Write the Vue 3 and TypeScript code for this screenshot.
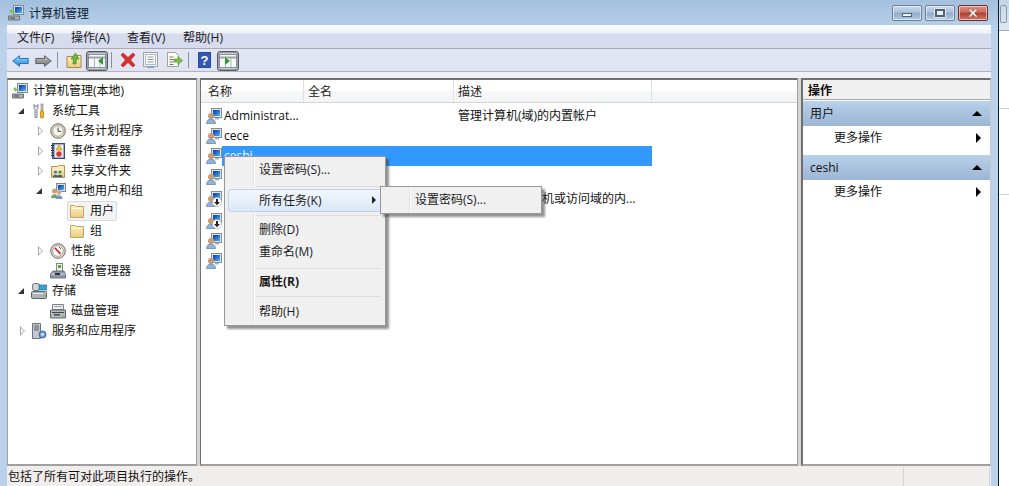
<script setup lang="ts">
interface TreeRow { label: string; depth: number; arrow: '' | 'open' | 'closed'; icon: string; selected?: boolean }
const tree: TreeRow[] = [
  { label: '计算机管理(本地)', depth: 0, arrow: '', icon: 'computer' },
  { label: '系统工具', depth: 1, arrow: 'open', icon: 'tools' },
  { label: '任务计划程序', depth: 2, arrow: 'closed', icon: 'clock' },
  { label: '事件查看器', depth: 2, arrow: 'closed', icon: 'log' },
  { label: '共享文件夹', depth: 2, arrow: 'closed', icon: 'share' },
  { label: '本地用户和组', depth: 2, arrow: 'open', icon: 'group' },
  { label: '用户', depth: 3, arrow: '', icon: 'folder', selected: true },
  { label: '组', depth: 3, arrow: '', icon: 'folder' },
  { label: '性能', depth: 2, arrow: 'closed', icon: 'gauge' },
  { label: '设备管理器', depth: 2, arrow: '', icon: 'device' },
  { label: '存储', depth: 1, arrow: 'open', icon: 'storage' },
  { label: '磁盘管理', depth: 2, arrow: '', icon: 'disk' },
  { label: '服务和应用程序', depth: 1, arrow: 'closed', icon: 'server' },
]
interface UserRow { name: string; desc: string; down?: boolean; gap: number; selected?: boolean }
const users: UserRow[] = [
  { name: 'Administrat...', desc: '管理计算机(域)的内置帐户', gap: 0 },
  { name: 'cece', desc: '', gap: 0 },
  { name: 'ceshi', desc: '', gap: 0, selected: true },
  { name: '', desc: '', gap: 1 },
  { name: '', desc: '供来宾访问计算机或访问域的内...', down: true, gap: 2 },
  { name: '', desc: '', down: true, gap: 2 },
  { name: '', desc: '', gap: 0 },
  { name: '', desc: '', gap: 0 },
]
const menus = ['文件(F)', '操作(A)', '查看(V)', '帮助(H)']
</script>

<template>
  <div class="screen">
    <svg class="defs" width="0" height="0" aria-hidden="true">
      <defs>
        <linearGradient id="g-blue" x1="0" y1="0" x2="0" y2="1"><stop offset="0" stop-color="#9fe0ff"/><stop offset="1" stop-color="#1f83d8"/></linearGradient>
        <linearGradient id="g-gray" x1="0" y1="0" x2="0" y2="1"><stop offset="0" stop-color="#c8c8c8"/><stop offset="1" stop-color="#6f6f6f"/></linearGradient>
        <linearGradient id="g-folder" x1="0" y1="0" x2="0" y2="1"><stop offset="0" stop-color="#fdf0c0"/><stop offset="1" stop-color="#eccb7c"/></linearGradient>
        <linearGradient id="g-screen" x1="0" y1="0" x2="1" y2="1"><stop offset="0" stop-color="#0b2fb0"/><stop offset="1" stop-color="#49b6ee"/></linearGradient>
      </defs>
      <symbol id="i-computer" viewBox="0 0 16 16">
        <rect x="5.500" y="0.500" width="10" height="9" fill="#dfe3e8" stroke="#7f8790"/>
        <rect x="7" y="2" width="7" height="6" fill="url(#g-screen)"/>
        <path d="M0.500 11h11v4h-11z" fill="#a9afb5" stroke="#6a7076"/>
        <path d="M2 13h5" stroke="#3d4247"/>
        <path d="M1 6l3-2v1.500h2.500v2H4V9z" fill="#7cc452"/>
      </symbol>
      <symbol id="i-tools" viewBox="0 0 16 16">
        <path d="M3 1.500v4l1 1v8h2v-8l1-1v-4L6 3H4z" fill="#dfe3e6" stroke="#6b6f73" stroke-width=".8"/>
        <rect x="10" y="1" width="2" height="7" fill="#c9ccd0" stroke="#70757a" stroke-width=".6"/>
        <rect x="9.500" y="8" width="3" height="7" rx="1" fill="#f2b51c" stroke="#a87808" stroke-width=".7"/>
      </symbol>
      <symbol id="i-clock" viewBox="0 0 16 16">
        <circle cx="8" cy="8" r="7.300" fill="#d8d2bd" stroke="#74756f"/>
        <circle cx="8" cy="8" r="5.200" fill="#f7f6ee" stroke="#9a9a90" stroke-width=".7"/>
        <path d="M8 4.500V8.300h3" fill="none" stroke="#444" stroke-width="1"/>
      </symbol>
      <symbol id="i-log" viewBox="0 0 16 16">
        <rect x="2.500" y="0.500" width="12" height="15" fill="#5d78a3" stroke="#3b4c6b"/>
        <rect x="4.500" y="1.500" width="9" height="13" fill="#e8ecf2"/>
        <path d="M1 2.500h3M1 5h3M1 7.500h3M1 10h3M1 12.500h3" stroke="#30394a"/>
        <path d="M9 2l3 5H6z" fill="#f6c729" stroke="#a57d0c" stroke-width=".5"/>
        <circle cx="9" cy="11" r="2.700" fill="#d8383c"/>
      </symbol>
      <symbol id="i-share" viewBox="0 0 16 16">
        <path d="M1.500 3.500v11h13v-12h-6l-1 1z" fill="url(#g-folder)" stroke="#b4934d"/>
        <path d="M2 6.500h12" stroke="#fff8d8"/>
        <circle cx="5.500" cy="9" r="1.600" fill="#3a7fc7"/><circle cx="10" cy="9" r="1.600" fill="#3f9a42"/>
        <path d="M3 14c0-3 5-3 5 0zM7.500 14c0-3 5-3 5 0z" fill="#2d5d9a"/>
      </symbol>
      <symbol id="i-group" viewBox="0 0 16 16">
        <rect x="6.500" y="0.500" width="9" height="8" fill="#dfe3e8" stroke="#7f8790"/>
        <rect x="8" y="2" width="6" height="5" fill="url(#g-screen)"/>
        <circle cx="4.500" cy="8" r="2.500" fill="#c9a078"/>
        <path d="M1 15c0-5 7-5 7 0z" fill="#7aa35a"/>
        <circle cx="9" cy="9.500" r="2.400" fill="#d3ab84"/>
        <path d="M5.500 16c0-5 7-5 7 0z" fill="#6d9bd0"/>
      </symbol>
      <symbol id="i-folder" viewBox="0 0 16 16">
        <path d="M1.500 2.500v12h13v-11H7l-1-1z" fill="url(#g-folder)" stroke="#c2a768"/>
        <path d="M2.500 5.500h11" stroke="#fff9e2"/>
      </symbol>
      <symbol id="i-gauge" viewBox="0 0 16 16">
        <circle cx="8" cy="8" r="7.300" fill="#dcdcd6" stroke="#6d6f6c"/>
        <circle cx="8" cy="8" r="5.300" fill="#fbfbf8" stroke="#8d8d88" stroke-width=".7"/>
        <path d="M5 5l5.500 6" stroke="#d11f1f" stroke-width="1.800"/>
        <path d="M9 4l2 2" stroke="#d11f1f"/>
      </symbol>
      <symbol id="i-device" viewBox="0 0 16 16">
        <rect x="6.500" y="0.500" width="6" height="8" fill="#eef0e8" stroke="#83877f"/>
        <rect x="8" y="2" width="3" height="3" fill="#54a54a"/>
        <path d="M3 8h11l1.500 3v4H.5v-4z" fill="#8f9aa6" stroke="#555e68" stroke-width=".8"/>
        <path d="M1 11h14" stroke="#d7dde3"/>
        <rect x="5" y="10" width="5" height="2" fill="#2e3338"/>
      </symbol>
      <symbol id="i-storage" viewBox="0 0 16 16">
        <rect x="1.500" y="0.500" width="7" height="7" rx="2" fill="#cfd4d8" stroke="#6d7378"/>
        <rect x="8" y="2" width="7.500" height="5" fill="#3aa0d8" stroke="#266a94" stroke-width=".7"/>
        <rect x="0.500" y="8.500" width="15" height="7" rx="1" fill="#aeb4b8" stroke="#5e6468"/>
        <path d="M2 10.500h10" stroke="#e3e7ea"/>
        <rect x="12.500" y="12" width="1.800" height="1.800" fill="#58c04a"/>
      </symbol>
      <symbol id="i-disk" viewBox="0 0 16 16">
        <path d="M2.500 1.500h11v5h-11z" fill="#eef0f1" stroke="#7b8186"/>
        <path d="M4 3.500h8" stroke="#9ba1a6"/>
        <path d="M.5 7h15v8H.5z" fill="#b4babd" stroke="#62686c"/>
        <path d="M2 9.500h12" stroke="#3f4549"/>
        <rect x="4" y="11" width="6" height="1.600" fill="#4a5054"/>
        <rect x="12" y="12" width="1.800" height="1.800" fill="#6ec654"/>
      </symbol>
      <symbol id="i-server" viewBox="0 0 16 16">
        <path d="M1.500 .5h8v15h-8z" fill="#c3c9cf" stroke="#6c7278"/>
        <path d="M3 3h5M3 5h5M3 7h5" stroke="#55606a"/>
        <circle cx="11.500" cy="11.500" r="3.500" fill="#6f9bd0" stroke="#3d6596"/>
        <circle cx="11.500" cy="11.500" r="1.300" fill="#eef4fb"/>
      </symbol>
      <symbol id="i-user" viewBox="0 0 16 16">
        <rect x="5.500" y="0.500" width="10" height="9" fill="#e1e5e9" stroke="#848b92"/>
        <rect x="7" y="2" width="7" height="6" fill="url(#g-screen)"/>
        <path d="M9 10h4v1.500H9z" fill="#aab0b6"/>
        <circle cx="5" cy="8" r="3" fill="#c79c74"/>
        <path d="M.5 15.500c0-6 9-6 9 0z" fill="#8fb4de" stroke="#5c7da6" stroke-width=".7"/>
      </symbol>
      <symbol id="i-user-down" viewBox="0 0 16 16">
        <rect x="5.500" y="0.500" width="10" height="9" fill="#e1e5e9" stroke="#848b92"/>
        <rect x="7" y="2" width="7" height="6" fill="url(#g-screen)"/>
        <circle cx="5" cy="8" r="3" fill="#c79c74"/>
        <path d="M.5 15.500c0-6 9-6 9 0z" fill="#8fb4de" stroke="#5c7da6" stroke-width=".7"/>
        <circle cx="11" cy="11" r="4.600" fill="#fff" stroke="#9a9a9a" stroke-width=".6"/>
        <path d="M10 8h2v3h2l-3 3.200L8 11h2z" fill="#222"/>
      </symbol>
      <symbol id="i-split" viewBox="0 0 18 14">
        <rect x=".5" y=".5" width="17" height="13" fill="#f5f7f9" stroke="#8a929a"/>
        <path d="M1 3.500h16" stroke="#9ca4ab" stroke-width="2"/>
        <path d="M6.500 4v9M12 4v9" stroke="#aeb5bb"/>
      </symbol>
    </svg>

    <div class="win">
      <header class="title">
        <svg class="title-icon"><use href="#i-computer"/></svg>
        <span class="title-text">计算机管理</span>
        <div class="caps">
          <div class="cap"><i class="min"></i></div>
          <div class="cap"><i class="max"></i></div>
          <div class="cap close">
            <svg width="14" height="10" viewBox="0 0 14 10"><path d="M2 1h2.500L7 3.500 9.500 1H12L8.500 5 12 9H9.500L7 6.500 4.500 9H2l3.500-4z" fill="#fff" stroke="#7c3b33" stroke-width=".5"/></svg>
          </div>
        </div>
      </header>

      <div class="client">
        <nav class="menubar">
          <span v-for="m in menus" :key="m" class="menu-item">{{ m }}</span>
        </nav>

        <div class="toolbar">
          <svg class="tb back" width="17" height="12" viewBox="0 0 17 14" preserveAspectRatio="none"><path d="M.8 7L7.500 .8V4h8.700v6H7.500v3.200z" fill="url(#g-blue)" stroke="#1a6cb4"/></svg>
          <svg class="tb fwd" width="17" height="12" viewBox="0 0 17 14" preserveAspectRatio="none"><path d="M16.200 7L9.500 .8V4H.8v6h8.700v3.200z" fill="url(#g-gray)" stroke="#5a5a5a"/></svg>
          <i class="tsep s1"></i>
          <svg class="tb up" width="16" height="16" viewBox="0 0 16 16"><path d="M1 4.500v11h14v-12H8L7 4.500z" fill="url(#g-folder)" stroke="#a58a4a"/><path d="M7 12l.5-5L5 7l4.500-6L13 7h-2.500L10 12z" fill="#6fb83a" stroke="#3e7f1c" stroke-width=".6"/></svg>
          <div class="toggle t1">
            <svg width="18" height="14"><use href="#i-split"/></svg>
            <svg class="toggle-mark" width="5" height="8" viewBox="0 0 5 8"><path d="M5 0L0 4l5 4z" fill="#2f9a3a"/></svg>
          </div>
          <i class="tsep s2"></i>
          <svg class="tb del" width="16" height="16" viewBox="0 0 16 16"><path d="M1 3l2-2 5 4.500L13 1l2 2-4.500 5L15 13l-2 2-5-4.500L3 15l-2-2 4.500-5z" fill="#dd2b25" stroke="#a3211b" stroke-width=".6"/></svg>
          <svg class="tb prop" width="15" height="16" viewBox="0 0 15 16"><rect x=".5" y=".5" width="14" height="14" fill="#f4f5f6" stroke="#9ea3a8"/><rect x="2.500" y="2.500" width="10" height="10" fill="#fff" stroke="#b3b7bb"/><path d="M4.500 5h6M4.500 7.500h6M4.500 10h6" stroke="#8b9095"/><path d="M4 15.500h7" stroke="#5db3e4"/></svg>
          <svg class="tb exp" width="17" height="16" viewBox="0 0 17 16"><path d="M1.500.5h8l3 3v11h-11z" fill="#fbfaf0" stroke="#a4a294"/><path d="M3.500 5h4M3.500 7.500h4M3.500 10h4M3.500 12.500h4" stroke="#77766d"/><path d="M8 7h4V4.500L16.500 8.500 12 12.500V10H8z" fill="#7cc24c" stroke="#3f8222" stroke-width=".6"/></svg>
          <i class="tsep s3"></i>
          <svg class="tb help" width="13" height="16" viewBox="0 0 13 16"><rect width="13" height="16" fill="#2a4aa4"/><rect x="1" y="1" width="11" height="14" fill="#3a60c0" opacity=".6"/><text x="6.500" y="13" text-anchor="middle" fill="#fff" font-size="13" font-weight="700" font-family="Liberation Sans, sans-serif">?</text></svg>
          <div class="toggle t2">
            <svg width="18" height="14"><use href="#i-split"/></svg>
            <svg class="toggle-mark m2" width="5" height="8" viewBox="0 0 5 8"><path d="M0 0l5 4-5 4z" fill="#2f9a3a"/></svg>
          </div>
        </div>

        <div class="panes">
          <aside class="pane left">
            <div v-for="r in tree" :key="r.label" class="tree-row" :class="`d${r.depth}`">
              <span class="arrow" :class="r.arrow"></span>
              <svg class="tree-icon"><use :href="`#i-${r.icon}`"/></svg>
              <span class="tree-label" :class="{ sel: r.selected }">{{ r.label }}</span>
            </div>
          </aside>

          <main class="pane middle">
            <div class="thead">
              <span class="th c1">名称</span>
              <span class="th c2">全名</span>
              <span class="th c3">描述</span>
            </div>
            <div v-for="(u, i) in users" :key="i" class="urow" :class="`gap${u.gap}`">
              <svg class="uicon"><use :href="u.down ? '#i-user-down' : '#i-user'"/></svg>
              <div class="ucells" :class="{ selected: u.selected }">
                <span class="uname">{{ u.name }}</span>
                <span class="udesc">{{ u.desc }}</span>
              </div>
            </div>
          </main>

          <aside class="pane right">
            <div class="ahead">操作</div>
            <div class="aband">用户<i class="up-tri"></i></div>
            <div class="aitem">更多操作<i class="right-tri"></i></div>
            <div class="aband second">ceshi<i class="up-tri"></i></div>
            <div class="aitem">更多操作<i class="right-tri"></i></div>
          </aside>
        </div>

        <footer class="status">
          <span class="status-text">包括了所有可对此项目执行的操作。</span>
          <i class="st1"></i>
          <i class="st2"></i>
        </footer>
      </div>

      <div class="ctx">
        <div class="mi first">设置密码(S)...</div>
        <hr class="msep s-a" />
        <div class="mi hot">所有任务(K)<i class="m-tri"></i></div>
        <hr class="msep s-b" />
        <div class="mi">删除(D)</div>
        <div class="mi">重命名(M)</div>
        <hr class="msep s-c" />
        <div class="mi bold">属性(R)</div>
        <hr class="msep s-d" />
        <div class="mi">帮助(H)</div>
      </div>
      <div class="ctx sub">
        <div class="mi">设置密码(S)...</div>
      </div>
    </div>

    <div class="edge"></div>
    <div class="behind">
      <div class="behind-top"><i class="behind-btn"></i></div>
      <div class="behind-line l1"></div>
      <div class="behind-line l2"></div>
    </div>
  </div>
</template>

<style>
html, body { margin: 0; padding: 0; overflow: hidden; background: #fff; }
</style>

<style scoped>
.screen { width: 1009px; height: 486px; display: flex; overflow: hidden; position: relative; font: 12px/16px "Open Sans", "Noto Sans CJK SC", sans-serif; color: #111; }
.defs { position: absolute; }
.win { width: 998px; height: 486px; flex: none; display: flex; flex-direction: column; position: relative; background: linear-gradient(#a3c0de 0, #b9d1ea 30px, #b9d1ea 100%); }
.edge { width: 1px; background: #0b1a26; flex: none; }
.behind { flex: 1; background: #fff; position: relative; }
.behind-top { height: 30px; background: linear-gradient(#c2d6e8, #dfe9f2); border-bottom: 1px solid #a9a9a9; position: relative; }
.behind-btn { position: absolute; left: 1px; top: 5px; width: 5px; height: 16px; border: 1px solid #8d98a6; border-radius: 2px; }
.behind-line { position: absolute; left: 0; right: 0; height: 1px; background: #b8d5f5; }
.l1 { top: 108px; } .l2 { top: 194px; }

.title { height: 25px; flex: none; display: flex; align-items: center; padding-left: 8px; position: relative; }
.title-icon { width: 16px; height: 16px; }
.title-text { margin-left: 5px; margin-top: 2px; color: #10202e; }
.caps { position: absolute; right: 10px; top: 5px; display: flex; gap: 3px; }
.cap { width: 30px; height: 16px; box-sizing: border-box; border: 1px solid #6d7e94; border-radius: 2px; background: linear-gradient(#c7d8ea 0, #a9c2dc 45%, #8eabc9 50%, #b3cbe2 100%); display: flex; align-items: center; justify-content: center; box-shadow: inset 0 0 0 1px rgba(255,255,255,.55); }
.cap.close { border-color: #6b2b2a; background: linear-gradient(#dc9186 0, #c8695a 45%, #ad3f2f 50%, #cf7a66 100%); }
.min { display: block; width: 10px; height: 4px; margin-top: 4px; background: #f2f5f8; border: 1px solid #4f6178; box-sizing: border-box; }
.max { display: block; width: 10px; height: 8px; border: 2px solid #4f6178; background: #e9eef4; box-sizing: border-box; outline: 1px solid #dfe7ef; }

.client { flex: 1; margin-left: 7px; margin-right: 7px; display: flex; flex-direction: column; min-height: 0; background: #f0f0f5; }
.menubar { height: 23px; flex: none; display: flex; align-items: center; padding: 2px 0 0 10px; box-sizing: content-box; height: 21px; background: linear-gradient(#fbfcfe 0, #eef1f9 8px, #d6dbee 9px, #d6dbee 100%); border-bottom: 1px solid #a9a9ae; }
.menu-item { width: 56px; flex: none; color: #1a1a1a; }
.menu-item:first-child { width: 54px; }
.toolbar { height: 22px; flex: none; position: relative; background: linear-gradient(#e3e6f4, #dee2f1); border-bottom: 1px solid #b3b4ba; box-sizing: content-box; }
.tb { position: absolute; top: 4px; }
.back { left: 5px; top: 6px; } .fwd { left: 28px; top: 6px; } .up { left: 59px; top: 3px; }
.del { left: 113px; top: 3px; } .prop { left: 136px; top: 3px; } .exp { left: 159px; top: 3px; } .help { left: 191px; top: 3px; }
.tsep { position: absolute; top: 3px; width: 1px; height: 16px; background: #8d8f99; }
.s1 { left: 50px; } .s2 { left: 104px; } .s3 { left: 181px; }
.toggle { position: absolute; top: 2px; width: 22px; height: 20px; box-sizing: border-box; border: 1px solid #55585e; border-radius: 3px; background: #c5c8d2; box-shadow: inset 0 0 0 1px #9da0aa; display: flex; align-items: center; justify-content: center; }
.t1 { left: 79px; } .t2 { left: 210px; }
.toggle-mark { position: absolute; left: 11px; top: 5px; }
.m2 { left: 7px; }

.panes { flex: 1; min-height: 0; margin-top: 6px; display: flex; gap: 3px; background: #d4d4d4; }
.pane { background: #fff; box-sizing: border-box; min-height: 0; border-top: 2px solid #6f6f6f; border-bottom: 2px solid #a0a0a0; position: relative; overflow: hidden; }
.left { width: 190px; border-left: 1px solid #a0a0a0; border-right: 1px solid #a0a0a0; padding-top: 1px; z-index: 0; }
.middle { width: 598px; border-left: 1px solid #6f6f6f; border-right: 1px solid #a0a0a0; }
.right { flex: 1; border-left: 2px solid #6f6f6f; border-right: 1px solid #c8c8c8; }

.tree-row { height: 20px; display: flex; align-items: center; }
.d0 { padding-left: 4px; } .d1 { padding-left: 4px; } .d2 { padding-left: 22px; } .d3 { padding-left: 42px; }
.arrow { width: 16px; height: 10px; flex: none; position: relative; }
.d0 .arrow { width: 0; }
.d3 .arrow { width: 18px; }
.arrow.open::before { content: ""; position: absolute; left: 6px; top: 2px; border-style: solid; border-width: 0 0 6px 6px; border-color: transparent transparent #333 transparent; }
.arrow.closed::before { content: ""; position: absolute; left: 8px; top: 0; border-style: solid; border-width: 5px 0 5px 5px; border-color: transparent transparent transparent #a6a6a6; }
.arrow.closed::after { content: ""; position: absolute; left: 8.500px; top: 1.500px; border-style: solid; border-width: 3.500px 0 3.500px 3.500px; border-color: transparent transparent transparent #fff; }
.tree-icon { width: 16px; height: 16px; flex: none; }
.d0 .tree-icon { margin-left: 0; }
.d1 .tree-icon { margin-left: 3px; }
.d2 .tree-icon { margin-left: 4px; }
.d3 .tree-icon { margin-left: 1px; }
.tree-label { margin-left: 5px; white-space: nowrap; }
.sel { position: relative; }
.sel::before { content: ""; position: absolute; left: -23px; right: -3px; top: -2px; bottom: -2px; border: 1px solid #dadada; border-radius: 2px; background: #f3f3f3; z-index: -1; }

.thead { height: 22px; display: flex; background: linear-gradient(#fff 0, #fff 50%, #f6f7f8 50%, #f3f4f6 100%); border-bottom: 1px solid #d5d5d5; }
.th { box-sizing: border-box; padding-left: 7px; line-height: 23px; border-right: 1px solid #dde0e3; color: #222; }
.c1 { width: 103px; } .c2 { width: 150px; padding-left: 4px; } .c3 { width: 198px; padding-left: 4px; }
.urow { height: 20px; display: flex; align-items: center; padding-left: 5px; }
.thead + .urow { margin-top: 3px; }
.gap1 { margin-top: 1px; } .gap2 { margin-top: 2px; }
.uicon { width: 16px; height: 16px; flex: none; }
.ucells { display: flex; width: 430px; height: 20px; line-height: 20px; padding-left: 2px; box-sizing: border-box; }
.ucells.selected { background: #3399ff; color: #fff; }
.uname { width: 234px; flex: none; white-space: nowrap; }
.udesc { white-space: nowrap; }

.ahead { height: 19px; line-height: 21px; padding-left: 5px; background: #f0f0f0; border-bottom: 1px solid #a8a8a8; font-weight: 700; }
.aband { height: 25px; line-height: 25px; margin-top: 1px; padding-left: 7px; position: relative; background: linear-gradient(#b9d1ea, #9bb6d4); }
.aband.second { margin-top: 0; }
.aitem { height: 29px; line-height: 23px; padding-left: 31px; position: relative; }
.up-tri { position: absolute; right: 8px; top: 10px; border-style: solid; border-width: 0 5px 5px 5px; border-color: transparent transparent #000 transparent; }
.right-tri { position: absolute; right: 9px; top: 7px; border-style: solid; border-width: 5px 0 5px 5px; border-color: transparent transparent transparent #000; }

.status { height: 20px; flex: none; position: relative; background: #f0eded; line-height: 21px; padding-left: 1px; }
.status-text { color: #111; }
.st1, .st2 { position: absolute; top: 1px; bottom: 0; width: 1px; background: #d4d4d4; }
.st1 { left: 896px; } .st2 { left: 982px; }

.ctx { position: absolute; left: 224px; top: 156px; width: 162px; box-sizing: border-box; border: 1px solid #979797; background: linear-gradient(to right, #f0f0f0 28px, #e2e3e3 28px, #e2e3e3 29px, #fff 29px, #fff 30px, #f0f0f0 30px); box-shadow: 3px 3px 2px rgba(60,60,60,.55); padding: 2px 3px 2px 2px; z-index: 5; color: #1a1a1a; }
.mi { height: 22px; line-height: 21px; padding-left: 32px; position: relative; box-sizing: border-box; }
.hot { height: 23px; background: linear-gradient(#f2f6fb, #dbe8f7); border: 1px solid #bcd4ef; border-radius: 3px; padding-left: 30px; margin: 0 -1px 0 1px; line-height: 22px; }
.bold { font-weight: 700; }
.m-tri { position: absolute; right: 6px; top: 6px; border-style: solid; border-width: 4px 0 4px 4px; border-color: transparent transparent transparent #222; }
.msep { border: 0; height: 1px; background: #dcdcdc; margin: 0 1px 0 29px; }
.s-a { margin-top: 5px; margin-bottom: 2px; }
.s-b { margin-top: 3px; margin-bottom: 3px; }
.s-c { margin-top: 5px; margin-bottom: 2px; }
.s-d { margin-top: 3px; margin-bottom: 4px; }
.sub { left: 380px; top: 186px; height: 28px; padding-top: 2px; }
</style>
